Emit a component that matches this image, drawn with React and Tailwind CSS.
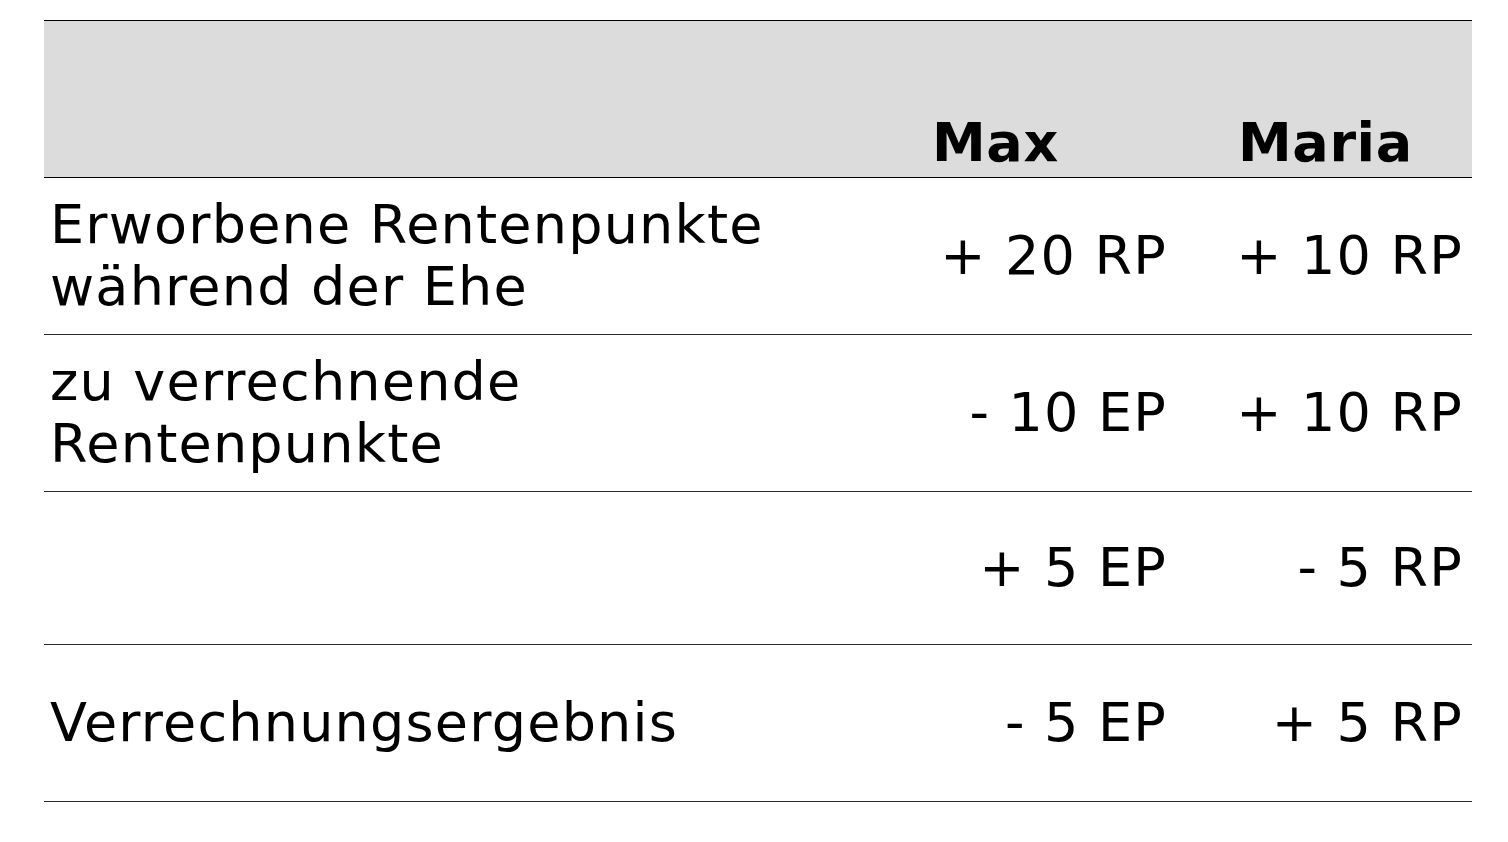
import React from 'react';

const rows = [
  { label: ['Erworbene Rentenpunkte', 'während der Ehe'], max: '+ 20 RP', maria: '+ 10 RP', h: 'h-[157px]' },
  { label: ['zu verrechnende', 'Rentenpunkte'], max: '- 10 EP', maria: '+ 10 RP', h: 'h-[157px]' },
  { label: [], max: '+ 5 EP', maria: '- 5 RP', h: 'h-[153px]' },
  { label: ['Verrechnungsergebnis'], max: '- 5 EP', maria: '+ 5 RP', h: 'h-[157px]' },
];

function App() {
  return (
    <div className="min-h-screen bg-white text-black font-['DejaVu_Sans',Verdana,sans-serif] pt-[20px] pl-[44px]">
      <div className="w-[1428px]">
        {/* header */}
        <div className="grid grid-cols-[882px_306px_240px] h-[158px] bg-[#dcdcdc] border-t border-b border-black items-end">
          <div />
          <div className="pl-[6px] pb-[3px] text-[54px] leading-[62px] font-bold tracking-[0.6px]">Max</div>
          <div className="pl-[6px] pb-[3px] text-[54px] leading-[62px] font-bold tracking-[0.6px]">Maria</div>
        </div>

        {rows.map((r, i) => (
          <div key={i} className={`grid grid-cols-[882px_306px_240px] ${r.h} border-b border-[#2a2a2a] items-center text-[54px] leading-[62px] tracking-[1.2px]`}>
            <div className="pl-[6px]">
              {r.label.map((l, j) => (
                <div key={j}>{l}</div>
              ))}
            </div>
            <div className="text-right pr-[65px]">{r.max}</div>
            <div className="text-right pr-[9px]">{r.maria}</div>
          </div>
        ))}
      </div>
    </div>
  );
}

export default App;
